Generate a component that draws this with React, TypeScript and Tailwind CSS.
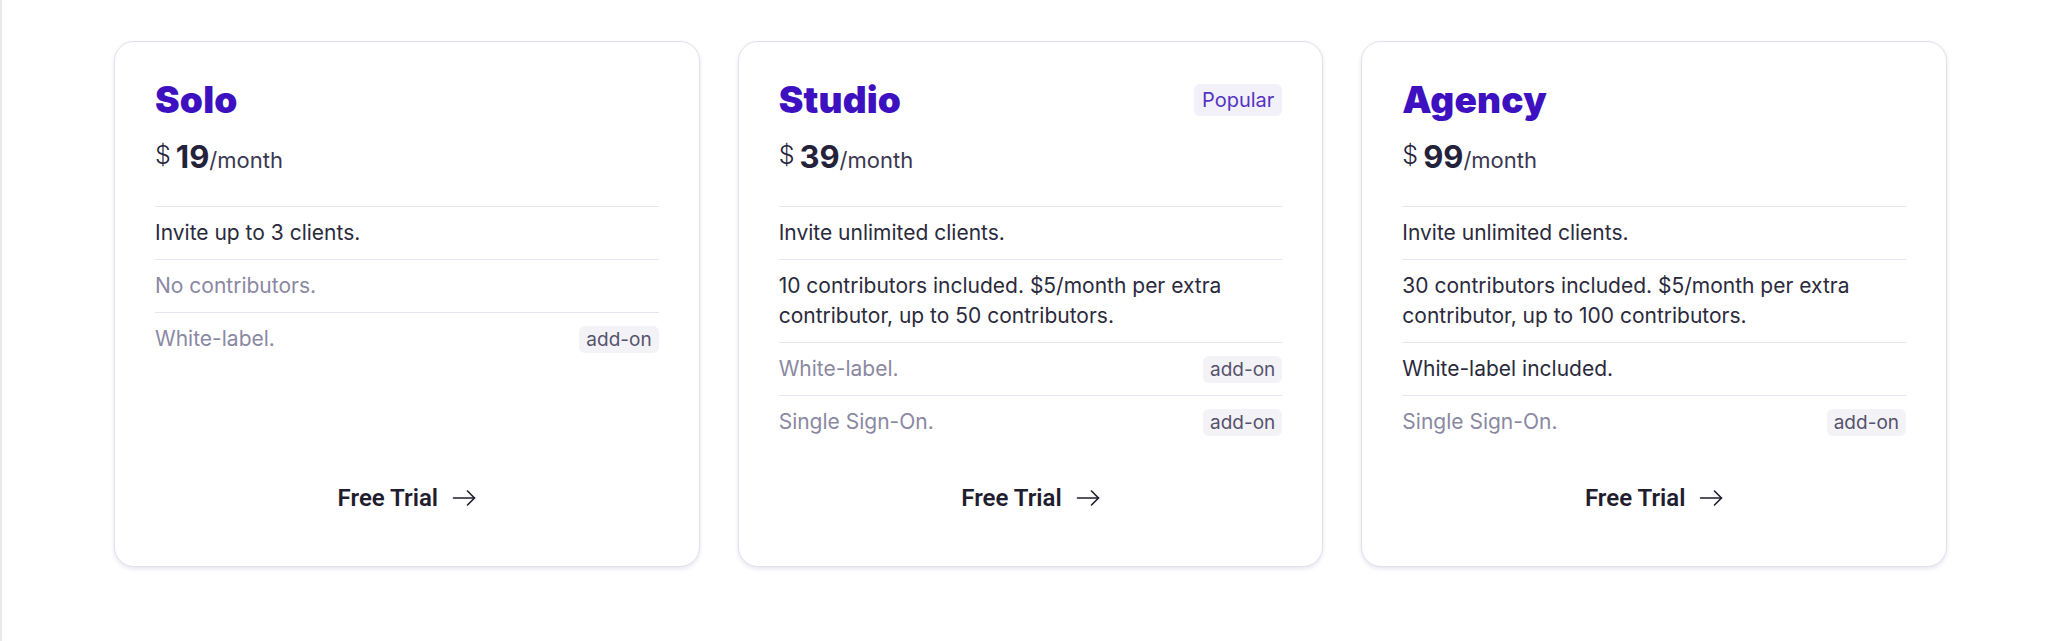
import React from "react";

type Feature = { text: string; muted?: boolean; addon?: boolean };
type Plan = { name: string; price: string; popular?: boolean; features: Feature[] };

const plans: Plan[] = [
  {
    name: "Solo",
    price: "19",
    features: [
      { text: "Invite up to 3 clients." },
      { text: "No contributors.", muted: true },
      { text: "White-label.", muted: true, addon: true },
    ],
  },
  {
    name: "Studio",
    price: "39",
    popular: true,
    features: [
      { text: "Invite unlimited clients." },
      { text: "10 contributors included. $5/month per extra contributor, up to 50 contributors." },
      { text: "White-label.", muted: true, addon: true },
      { text: "Single Sign-On.", muted: true, addon: true },
    ],
  },
  {
    name: "Agency",
    price: "99",
    features: [
      { text: "Invite unlimited clients." },
      { text: "30 contributors included. $5/month per extra contributor, up to 100 contributors." },
      { text: "White-label included." },
      { text: "Single Sign-On.", muted: true, addon: true },
    ],
  },
];

function Arrow() {
  return (
    <svg width="24" height="16" viewBox="0 0 24 16" fill="none" stroke="currentColor" strokeWidth="1.6" strokeLinecap="round" strokeLinejoin="round">
      <path d="M1.5 8H22.5" />
      <path d="M15.5 1L22.5 8L15.5 15" />
    </svg>
  );
}

function Card({ plan }: { plan: Plan }) {
  return (
    <div className="flex flex-col rounded-[20px] border border-[#e2e0ec] bg-white p-10 shadow-[0_2px_4px_rgba(60,50,120,0.12)]">
      <div className="flex items-center justify-between">
        <h2 className="text-[37px] leading-[36px] font-black tracking-[0.005em] text-[#3d10c0]">{plan.name}</h2>
        {plan.popular && (
          <span className="rounded-md bg-[#f2f0f8] px-[8px] py-[4px] text-[20px] leading-[24px] text-[#5434c2]">Popular</span>
        )}
      </div>
      <div className="mt-[22px] flex items-baseline text-[#24223a]">
        <span className="relative -top-[4px] mr-[5px] text-[25px] leading-[34px] font-light">$</span>
        <span className="text-[31px] leading-[34px] font-bold">{plan.price}</span>
        <span className="text-[22px] leading-[34px] text-[#3a3850]">/month</span>
      </div>
      <div className="mt-[29px]">
        {plan.features.map((f, i) => (
          <div key={i} className="flex items-center justify-between gap-4 border-t border-[#e6e4ee] py-[11px]">
            <span className={`text-[21px] leading-[30px] ${f.muted ? "text-[#8a88a2]" : "text-[#2b2a3c]"}`}>{f.text}</span>
            {f.addon && (
              <span className="shrink-0 rounded-md bg-[#f3f2f7] px-[7px] py-[2px] text-[19px] leading-[23px] text-[#55536c]">add-on</span>
            )}
          </div>
        ))}
      </div>
      <div className="mt-auto pt-[22px]">
        <div className="flex items-center justify-center gap-[14px] py-3 text-[#1f1d2e]">
          <span className="text-[24px] leading-8 font-semibold" style={{ fontFamily: "Roboto, sans-serif" }}>Free Trial</span>
          <Arrow />
        </div>
      </div>
    </div>
  );
}

export default function App() {
  return (
    <div className="min-h-[641px] border-l-2 border-[#e9e8f0] bg-white" style={{ fontFamily: "Inter, Roboto, sans-serif" }}>
      <div className="grid grid-cols-3 gap-[38px] pt-[41px] pl-[112px] pr-[101px]">
        {plans.map((p) => (
          <Card key={p.name} plan={p} />
        ))}
      </div>
    </div>
  );
}
